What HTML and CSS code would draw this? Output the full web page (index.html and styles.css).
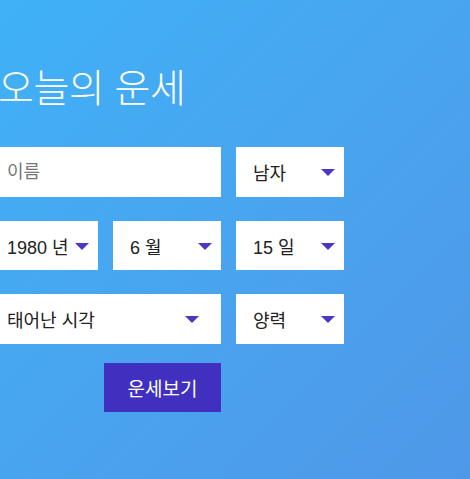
FILE: index.html
```html
<!DOCTYPE html>
<html lang="ko">
<head>
    <meta charset="UTF-8">
    <meta name="viewport" content="width=device-width, initial-scale=1.0">
    <title>오늘의 운세</title>
    <link rel="stylesheet" href="styles.css">
</head>
<body>
    <div id="wrap">
        <h1 class="title">오늘의 운세</h1>
        <div class="form">
            <input class="field name" type="text" placeholder="이름">
            <div class="field select">남자</div>

            <div class="field select">1980 년</div>
            <div class="field select">6 월</div>
            <div class="field select">15 일</div>

            <div class="field select wide time">태어난 시각</div>
            <div class="field select">양력</div>
        </div>
        <div class="actions">
            <button class="submit" type="button">운세보기</button>
        </div>
    </div>
</body>
</html>
```

FILE: styles.css
```css
/* Global */
* {
    box-sizing: border-box;
    margin: 0;
    padding: 0;
}
html, body {
    height: 100%;
}
body {
    font-family: "Liberation Sans", "Noto Sans CJK KR", sans-serif;
    background: linear-gradient(135deg, #3fb1f7 0%, #4aa3ee 55%, #4e98e8 100%);
    overflow: hidden;
}

#wrap {
    margin-left: -10px;
    padding-top: 63px;
    width: 354px;
}

/* Title */
.title {
    font-family: "Noto Sans CJK KR", sans-serif;
    font-weight: 300;
    font-size: 39px;
    line-height: 44px;
    letter-spacing: -0.5px;
    color: #fff;
    margin-left: 8px;
}

/* Form grid */
.form {
    display: grid;
    grid-template-columns: repeat(3, 108px);
    grid-template-rows: 50px 49px 50px;
    column-gap: 15px;
    row-gap: 24px;
    margin-top: 40px;
}
.field {
    background: #fff;
    border: none;
    outline: none;
    font-family: inherit;
    font-size: 18px;
    color: #222;
    padding: 0 17px;
    display: flex;
    align-items: center;
    position: relative;
}
.field.name {
    grid-column: span 2;
    width: 100%;
    height: 50px;
}
.field.name::placeholder {
    color: #777;
}
.field.wide {
    grid-column: span 2;
}

/* Select arrow */
.select::after {
    content: "";
    position: absolute;
    right: 9px;
    top: 50%;
    margin-top: -3px;
    border-left: 7px solid transparent;
    border-right: 7px solid transparent;
    border-top: 7px solid #4a37c6;
}
.select.time::after {
    right: 22px;
}

/* Button */
.actions {
    display: flex;
    justify-content: flex-end;
    width: 231px;
    margin-top: 19px;
}
.submit {
    width: 117px;
    height: 49px;
    border: none;
    background: #4130c0;
    color: #fff;
    font-family: inherit;
    font-size: 19px;
    cursor: pointer;
}
```
